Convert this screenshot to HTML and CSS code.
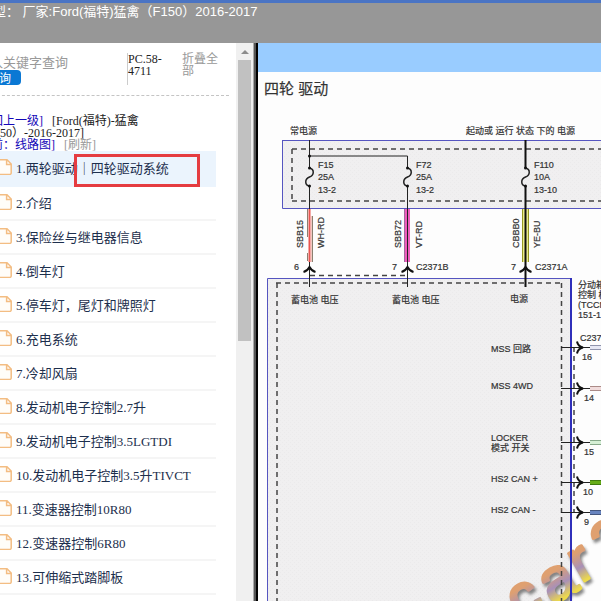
FILE: index.html
```html
<!DOCTYPE html>
<html lang="zh-CN">
<head>
<meta charset="utf-8">
<title>四轮 驱动</title>
<link rel="stylesheet" href="styles.css">
</head>
<body>
<svg class="defs" aria-hidden="true">
  <symbol id="page" viewBox="0 0 15 16">
    <path d="M1 .8h9l4.2 4.2v9a1.4 1.4 0 0 1-1.4 1.4H1z" fill="#fffdf9"/>
    <path d="M1 .8h9l4.2 4.2v9a1.4 1.4 0 0 1-1.4 1.4H1M9.6 1v4.4h4.4" fill="none" stroke="#f3bd83" stroke-width="1.5"/>
  </symbol>
</svg>
<header class="top"><p>型： 厂家:Ford(福特)猛禽（F150）2016-2017</p></header>
<div class="main">
  <aside class="side">
    <div class="side-content">
      <div class="tools">
        <form class="search">
          <input type="text" placeholder="入关键字查询" aria-label="关键字查询">
          <button type="button">查询</button>
        </form>
        <p class="code">PC.58-<br>4711</p>
        <a class="fold" href="#">折叠全部</a>
      </div>
      <nav class="crumbs">
        <div><a href="#">[回上一级]</a><span>[Ford(福特)-猛禽</span></div>
        <div class="model">50）-2016-2017]</div>
        <div class="current"><a href="#">前：线路图]</a><a class="refresh" href="#">[刷新]</a></div>
      </nav>
      <ul class="list">
        <li class="active"><svg><use href="#page"/></svg><a href="#">1.两轮驱动<span class="mark">｜四轮驱动系统</span></a></li>
        <li><svg><use href="#page"/></svg><a href="#">2.介绍</a></li>
        <li><svg><use href="#page"/></svg><a href="#">3.保险丝与继电器信息</a></li>
        <li><svg><use href="#page"/></svg><a href="#">4.倒车灯</a></li>
        <li><svg><use href="#page"/></svg><a href="#">5.停车灯，尾灯和牌照灯</a></li>
        <li><svg><use href="#page"/></svg><a href="#">6.充电系统</a></li>
        <li><svg><use href="#page"/></svg><a href="#">7.冷却风扇</a></li>
        <li><svg><use href="#page"/></svg><a href="#">8.发动机电子控制2.7升</a></li>
        <li><svg><use href="#page"/></svg><a href="#">9.发动机电子控制3.5LGTDI</a></li>
        <li><svg><use href="#page"/></svg><a href="#">10.发动机电子控制3.5升TIVCT</a></li>
        <li><svg><use href="#page"/></svg><a href="#">11.变速器控制10R80</a></li>
        <li><svg><use href="#page"/></svg><a href="#">12.变速器控制6R80</a></li>
        <li><svg><use href="#page"/></svg><a href="#">13.可伸缩式踏脚板</a></li>
      </ul>
    </div>
  </aside>
  <div class="scroll"><i class="arrow"></i><i class="thumb"></i></div>
  <div class="divider"></div>
  <main class="view">
    <div class="bar"></div>
    <svg class="diagram" viewBox="258 72 343 529" preserveAspectRatio="xMinYMin slice">
      <defs>
        <linearGradient id="wm" x1="0" y1="0" x2="0" y2="1">
          <stop offset=".38" stop-color="#dfa070"/>
          <stop offset=".6" stop-color="#a890b8"/>
          <stop offset=".8" stop-color="#ecd94c"/>
        </linearGradient>
        <filter id="soft" x="-20%" y="-20%" width="140%" height="140%"><feGaussianBlur stdDeviation="1.5"/></filter>
        <pattern id="grain" width="4" height="4" patternUnits="userSpaceOnUse">
          <path fill="#f0eff0" d="M0 0h4v4H0z"/><path fill="#ebeaeb" d="M0 0h1v1H0zM2 2h1v1H2z"/>
        </pattern>
        <path id="fuse" d="M0 0c5 1 5 7 0 9s-5 8 0 9"/>
        <path id="up" d="M-6 5Q-2 4 0 0Q2 4 6 5"/>
        <path id="right" d="M-5-6Q-4-1 1 0Q-4 1-5 6"/>
      </defs>
      <text class="title" x="264" y="94">四轮 驱动</text>

      <g class="box">
        <path d="M282 140.500H610V208.500H282.500V140"/>
        <path d="M267.500 610V278.500H571V610"/>
      </g>

      <g class="brand shade" transform="translate(2 3)">
        <text transform="translate(520 621) rotate(-30)">c</text>
        <text transform="translate(552 605) rotate(-30)">a</text>
        <text transform="translate(581 583) rotate(-30)">r</text>
        <text transform="translate(606 567) rotate(-30)">2</text>
      </g>
      <g class="brand">
        <text transform="translate(520 621) rotate(-30)">c</text>
        <text transform="translate(552 605) rotate(-30)">a</text>
        <text transform="translate(581 583) rotate(-30)">r</text>
        <text transform="translate(606 567) rotate(-30)">2</text>
      </g>

      <path class="edge" d="M571 278V610"/>
      <g class="dash">
        <path d="M292 149H610M292 201H610M292 149V201"/>
        <path d="M276 283H561M277 283V610M561.500 283V610"/>
        <path d="M310 275.500H408M574 347V512"/>
      </g>

      <g class="harness">
        <path d="M307.500 209V237M307.500 253V261M312.500 216V262" stroke="#8a8070"/>
        <path d="M311.500 216V262" stroke="#f0c8c0"/>
        <path d="M309.500 209V262" stroke="#e9554f" stroke-width="2"/>
        <path d="M407 209V262" stroke="#ee5cbc" stroke-width="6"/>
        <path d="M404.500 209V262" stroke="#a06a9c"/>
        <path d="M525.500 209V262" stroke="#969722" stroke-width="7"/>
        <path d="M525.500 209V262" stroke="#ecec8c" stroke-width="5"/>
        <path d="M590 347.500h12" stroke="#8f94ac" stroke-width="5"/>
        <path d="M590 347.500h12" stroke="#e6e8f4" stroke-width="3"/>
        <path d="M590 388.500h12" stroke="#ab8b88" stroke-width="5"/>
        <path d="M590 388.500h12" stroke="#f1dcdc" stroke-width="3"/>
        <path d="M590 442.500h12" stroke="#86a88a" stroke-width="5"/>
        <path d="M590 442.500h12" stroke="#d5efd5" stroke-width="3"/>
        <path d="M590 482.500h12" stroke="#3e7a0e" stroke-width="5"/>
        <path d="M590 482.500h12" stroke="#65ac18" stroke-width="3"/>
        <path d="M590 512.500h12" stroke="#44567e" stroke-width="5"/>
        <path d="M590 512.500h12" stroke="#6884bf" stroke-width="3"/>
      </g>

      <g class="wire">
        <path d="M309.500 140V168M309.500 156H407.500V168M309.500 186V209M407.500 186V287M309.500 262V287"/>
        <path class="heavy" d="M525.500 140V168M525.500 186V287"/>
        <use href="#fuse" x="309.500" y="168"/><use href="#fuse" x="407.500" y="168"/><use href="#fuse" x="525.500" y="168"/>
        <path d="M561 347.500h29M561 388.500h29M561 442.500h29M561 482.500h29M561 512.500h29"/>
      </g>
      <g class="dots"><circle cx="309.500" cy="156" r="1.500"/><circle cx="309.500" cy="168" r="1.500"/><circle cx="309.500" cy="186" r="1.500"/><circle cx="407.500" cy="168" r="1.500"/><circle cx="407.500" cy="186" r="1.500"/><circle cx="525.500" cy="168" r="1.500"/><circle cx="525.500" cy="186" r="1.500"/></g>
      <g class="tips">
        <use href="#up" x="309.500" y="267"/><use href="#up" x="407.500" y="267"/><use href="#up" x="525.500" y="267"/>
        <use href="#right" x="582" y="347.500"/><use href="#right" x="582" y="388.500"/><use href="#right" x="582" y="442.500"/><use href="#right" x="582" y="482.500"/><use href="#right" x="582" y="512.500"/>
      </g>

      <g class="label">
        <text x="290" y="134">常电源</text><text x="466" y="134">起动或 运行 状态 下的 电源</text>
        <text x="318" y="168">F15</text><text x="318" y="180">25A</text><text x="318" y="193">13-2</text>
        <text x="416" y="168">F72</text><text x="416" y="180">25A</text><text x="416" y="193">13-2</text>
        <text x="534" y="168">F110</text><text x="534" y="180">10A</text><text x="534" y="193">13-10</text>
        <text transform="translate(303 248) rotate(-90)">SBB15</text>
        <text transform="translate(324 248) rotate(-90)">WH-RD</text>
        <text transform="translate(401 248) rotate(-90)">SBB72</text>
        <text transform="translate(422 248) rotate(-90)">VT-RD</text>
        <text transform="translate(519 248) rotate(-90)">CBBB0</text>
        <text transform="translate(540 248) rotate(-90)">YE-BU</text>
        <text x="294" y="270">6</text><text x="392" y="270">7</text><text x="416" y="270">C2371B</text>
        <text x="511" y="270">7</text><text x="535" y="270">C2371A</text>
        <text x="291" y="303">蓄电池 电压</text><text x="392" y="303">蓄电池 电压</text><text x="510" y="302">电源</text>
        <text x="491" y="352">MSS 回路</text><text x="491" y="389">MSS 4WD</text>
        <text x="491" y="441">LOCKER</text><text x="491" y="451">模式 开关</text>
        <text x="491" y="482">HS2 CAN +</text><text x="491" y="513">HS2 CAN -</text>
        <text x="578" y="288">分动箱</text><text x="578" y="298">控制 模块</text><text x="578" y="308">(TCCM)</text><text x="578" y="318">151-1</text>
        <text x="580" y="341">C2371</text><text x="582" y="360">16</text><text x="584" y="401">14</text><text x="584" y="455">15</text><text x="583" y="495">10</text><text x="584" y="525">9</text>
      </g>
    </svg>
  </main>
</div>
</body>
</html>
```

FILE: styles.css
```css
* { box-sizing: border-box; }
body {
  margin: 0;
  height: 100vh;
  display: flex;
  flex-direction: column;
  overflow: hidden;
  background: #fff;
  font-family: "Liberation Serif", "Noto Sans CJK SC", serif;
}
p, ul { margin: 0; padding: 0; }
a { color: inherit; text-decoration: none; }
.defs { display: none; }

.top {
  flex: 0 0 43px;
  border-top: 3px solid #4a74c4;
  background: #979797;
  color: #fff;
  font: 13px/17px "Liberation Sans", "Noto Sans CJK SC", sans-serif;
  white-space: pre;
}
.top p { margin-left: -7px; }

.main { flex: 1; display: flex; min-height: 0; }
.side { flex: 0 0 236px; overflow: hidden; }
.side-content { margin-left: -13px; }

.tools {
  display: flex;
  height: 53px;
  margin-right: 7px;
  padding-top: 10px;
  border-bottom: 1px dashed #c4c4c4;
  font-size: 12px;
  line-height: 12px;
}
.search { flex: 1; }
.search input {
  display: block;
  width: 100px;
  height: 17px;
  padding: 0 0 0 3px;
  border: 0;
  background: none;
  font: 13px/17px "Noto Sans CJK SC", sans-serif;
}
.search input::placeholder { color: #999; opacity: 1; }
.search button {
  display: block;
  width: 34px;
  height: 15px;
  padding: 0 10px 0 0;
  border: 0;
  border-radius: 4px;
  background: #0a78d4;
  color: #fff;
  font: 12px/15px "Noto Sans CJK SC", sans-serif;
}
.code { width: 55px; height: 32px; border-left: 1px solid #ccc; color: #222; }
.fold { width: 47px; padding-right: 6px; color: #999; }

.crumbs { padding: 19px 0 0; font-size: 12px; line-height: 12px; color: #222; white-space: nowrap; }
.crumbs div { display: flex; gap: 9px; }
.crumbs a { color: #1408b8; }
.crumbs .model { padding-left: 13px; }
.crumbs .current { padding-left: 4px; }
.crumbs .refresh { color: #999; }

.list { margin-right: 20px; list-style: none; font-size: 13px; color: #1d2f4d; }
.list li {
  display: flex;
  align-items: center;
  gap: 4px;
  height: 34px;
  padding: 0 0 2px 10px;
  border-bottom: 2px solid #f5f5f5;
  white-space: nowrap;
}
.list .active { height: 36px; background: #ebf4fd; border-color: #ebf4fd; }
.list svg { width: 15px; height: 16px; }
.mark { position: relative; }
.mark::after {
  content: "";
  position: absolute;
  inset: -7px -31px -11px -4px;
  border: 3px solid #e53c40;
}

.scroll { flex: 0 0 17px; background: #f0f0f0; padding: 7px 2px 0; }
.arrow { display: block; width: 8px; margin: 0 auto 6px; border: 4px solid transparent; border-top: 0; border-bottom-color: #8c8c8c; }
.thumb { display: block; height: 281px; background: #c1c1c1; }
.divider { flex: 0 0 5px; background: linear-gradient(90deg, #aaa 1px, #555 1px 3px, #000 3px); }

.view { flex: 1; min-width: 0; display: flex; flex-direction: column; }
.bar { flex: 0 0 29px; background: #9cf; }
.diagram { flex: 1; width: 100%; min-height: 0; background: #fdfdfd; }
.diagram text { font-family: "Liberation Sans", "Noto Sans CJK SC", sans-serif; }
.title, .label { fill: #333; stroke: #333; stroke-width: .2px; }
.title { font-size: 15px; }
.label { font-size: 9px; }
.box path { fill: url(#grain); stroke: #5555c0; }
.edge { fill: none; stroke: #2f2fba; stroke-width: 2px; }
.dash path { fill: none; stroke: #444; stroke-width: 1.5px; stroke-dasharray: 5 4; }
.harness path { fill: none; }
.wire { fill: none; stroke: #222; stroke-width: 1px; }
.wire use { stroke-width: 1.5px; }
.wire .heavy { stroke: #111; stroke-width: 2px; }
.dots { fill: #111; }
.tips { fill: none; stroke: #111; stroke-width: 2px; }
.brand { font-size: 60px; fill: url(#wm); stroke: url(#wm); stroke-width: 3px; stroke-linejoin: round; }
.shade { fill: #555; stroke: #555; filter: url(#soft); opacity: .7; }
```
